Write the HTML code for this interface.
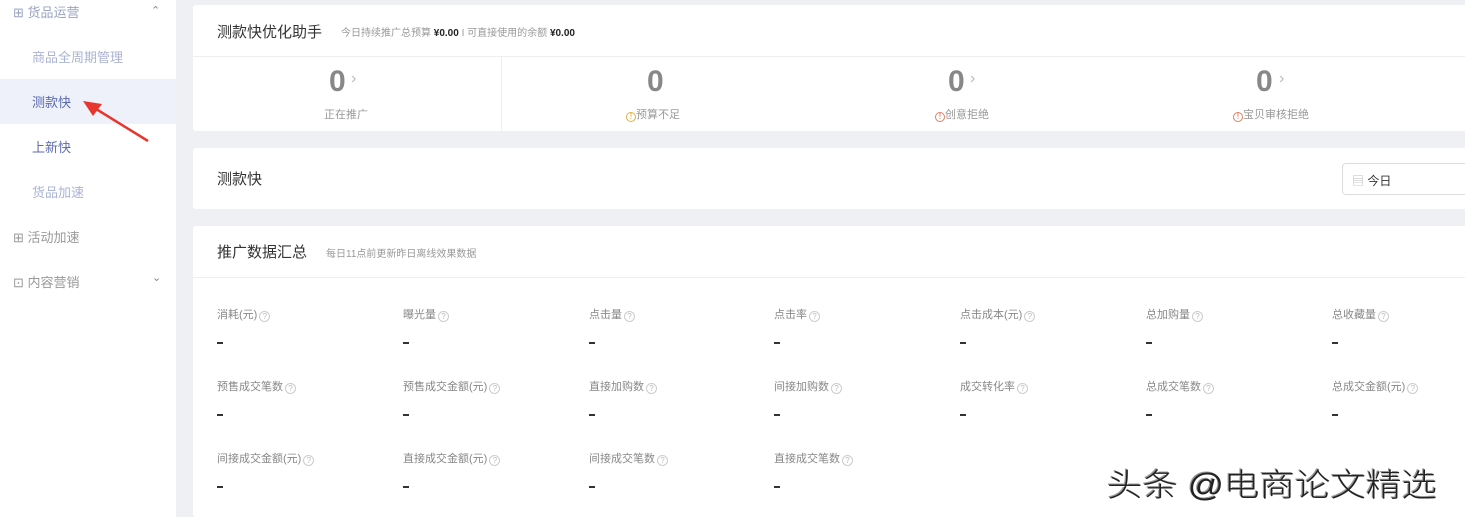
<!DOCTYPE html>
<html><head><meta charset="utf-8"><style>
*{margin:0;padding:0;box-sizing:border-box}
html,body{width:1465px;height:517px;overflow:hidden}
body{background:#eef0f4;font-family:"Liberation Sans","Noto Sans CJK SC",sans-serif;position:relative;color:#333}
.side{position:absolute;left:0;top:0;width:176px;height:517px;background:#fff}
.si{position:absolute;font-size:13px;color:#8a93b8}
.card{position:absolute;left:193px;width:1290px;background:#fff;border-radius:3px}
.abs{position:absolute}
.q{display:inline-block;width:11px;height:11px;border:1px solid #ccc;border-radius:50%;font-size:8px;line-height:9px;text-align:center;color:#bbb;vertical-align:-1px;margin-left:2px}
.lab{position:absolute;font-size:11px;color:#888}
.dash{position:absolute;width:6px;height:2px;background:#333}
.big{position:absolute;font-size:30px;font-weight:bold;color:#888;line-height:30px}
.arr{position:absolute;font-size:16px;color:#bbb}
.sl{position:absolute;font-size:11px;color:#999}
.w{display:inline-block;width:10px;height:10px;border:1px solid #e08060;border-radius:50%;font-size:8px;line-height:8px;text-align:center;color:#d06040;vertical-align:-1px}
</style></head><body>
<div class="side">
  <div class="si" style="left:13px;top:2px;color:#9aa3c3">⊞ 货品运营</div>
  <div class="si" style="left:151px;top:4px;color:#888;font-size:11px">⌃</div>
  <div class="si" style="left:32px;top:47px;color:#aab3d3">商品全周期管理</div>
  <div style="position:absolute;left:0;top:79px;width:176px;height:45px;background:#eef0fa"></div>
  <div class="si" style="left:32px;top:92px;color:#5c6bb0">测款快</div>
  <div class="si" style="left:32px;top:137px;color:#5c6bb0">上新快</div>
  <div class="si" style="left:32px;top:182px;color:#aab3d3">货品加速</div>
  <div class="si" style="left:13px;top:227px;color:#999">⊞ 活动加速</div>
  <div class="si" style="left:13px;top:272px;color:#999">⊡ 内容营销</div>
  <div class="si" style="left:152px;top:271px;color:#888;font-size:11px">⌄</div>
  <svg class="abs" style="left:80px;top:96px" width="72" height="48"><line x1="68" y1="45" x2="8" y2="8" stroke="#e8352e" stroke-width="2.5"/><polygon points="3,5 22,8 13,20" fill="#e8352e"/></svg>
</div>

<div class="card" style="top:5px;height:126px">
  <div class="abs" style="left:24px;top:16px;font-size:15px;color:#333">测款快优化助手</div>
  <div class="abs" style="left:148px;top:19px;font-size:10px;color:#999">今日持续推广总预算 <b style="color:#222">¥0.00</b> I 可直接使用的余额 <b style="color:#222">¥0.00</b></div>
  <div class="abs" style="left:0;top:51px;width:100%;height:1px;background:#eee"></div>
  <div class="abs" style="left:308px;top:52px;width:1px;height:74px;background:#eee"></div>
  <div class="big" style="left:136px;top:62px">0</div><div class="arr" style="left:158px;top:65px">›</div>
  <div class="sl" style="left:131px;top:101px">正在推广</div>
  <div class="big" style="left:454px;top:62px">0</div>
  <div class="sl" style="left:433px;top:101px"><span class="w" style="border-color:#e0b040;color:#d0a030">!</span>预算不足</div>
  <div class="big" style="left:755px;top:62px">0</div><div class="arr" style="left:777px;top:65px">›</div>
  <div class="sl" style="left:742px;top:101px"><span class="w">!</span>创意拒绝</div>
  <div class="big" style="left:1063px;top:62px">0</div><div class="arr" style="left:1086px;top:65px">›</div>
  <div class="sl" style="left:1040px;top:101px"><span class="w">!</span>宝贝审核拒绝</div>
</div>

<div class="card" style="top:148px;height:61px">
  <div class="abs" style="left:24px;top:20px;font-size:15px;color:#333">测款快</div>
  <div class="abs" style="left:1149px;top:15px;width:150px;height:32px;border:1px solid #ddd;border-radius:4px;font-size:12px;color:#333;padding:8px 0 0 9px"><span style="color:#bbb">▤</span> 今日</div>
</div>

<div class="card" style="top:226px;height:291px">
  <div class="abs" style="left:24px;top:15px;font-size:15px;color:#333">推广数据汇总</div>
  <div class="abs" style="left:133px;top:19px;font-size:10px;color:#999">每日11点前更新昨日离线效果数据</div>
  <div class="abs" style="left:0;top:51px;width:100%;height:1px;background:#eee"></div>
</div>

<div class="lab" style="left:217px;top:306px">消耗(元)<span class="q">?</span></div>
<div class="lab" style="left:403px;top:306px">曝光量<span class="q">?</span></div>
<div class="lab" style="left:589px;top:306px">点击量<span class="q">?</span></div>
<div class="lab" style="left:774px;top:306px">点击率<span class="q">?</span></div>
<div class="lab" style="left:960px;top:306px">点击成本(元)<span class="q">?</span></div>
<div class="lab" style="left:1146px;top:306px">总加购量<span class="q">?</span></div>
<div class="lab" style="left:1332px;top:306px">总收藏量<span class="q">?</span></div>
<div class="lab" style="left:217px;top:378px">预售成交笔数<span class="q">?</span></div>
<div class="lab" style="left:403px;top:378px">预售成交金额(元)<span class="q">?</span></div>
<div class="lab" style="left:589px;top:378px">直接加购数<span class="q">?</span></div>
<div class="lab" style="left:774px;top:378px">间接加购数<span class="q">?</span></div>
<div class="lab" style="left:960px;top:378px">成交转化率<span class="q">?</span></div>
<div class="lab" style="left:1146px;top:378px">总成交笔数<span class="q">?</span></div>
<div class="lab" style="left:1332px;top:378px">总成交金额(元)<span class="q">?</span></div>
<div class="lab" style="left:217px;top:450px">间接成交金额(元)<span class="q">?</span></div>
<div class="lab" style="left:403px;top:450px">直接成交金额(元)<span class="q">?</span></div>
<div class="lab" style="left:589px;top:450px">间接成交笔数<span class="q">?</span></div>
<div class="lab" style="left:774px;top:450px">直接成交笔数<span class="q">?</span></div>

<div class="dash" style="left:217px;top:342px"></div><div class="dash" style="left:403px;top:342px"></div><div class="dash" style="left:589px;top:342px"></div><div class="dash" style="left:774px;top:342px"></div><div class="dash" style="left:960px;top:342px"></div><div class="dash" style="left:1146px;top:342px"></div><div class="dash" style="left:1332px;top:342px"></div>
<div class="dash" style="left:217px;top:414px"></div><div class="dash" style="left:403px;top:414px"></div><div class="dash" style="left:589px;top:414px"></div><div class="dash" style="left:774px;top:414px"></div><div class="dash" style="left:960px;top:414px"></div><div class="dash" style="left:1146px;top:414px"></div><div class="dash" style="left:1332px;top:414px"></div>
<div class="dash" style="left:217px;top:486px"></div><div class="dash" style="left:403px;top:486px"></div><div class="dash" style="left:589px;top:486px"></div><div class="dash" style="left:774px;top:486px"></div>

<div class="abs" style="left:1107px;top:467px;font-size:32px;line-height:36px;font-weight:300;color:#222;letter-spacing:0;text-shadow:1px 1px 0 #fff,-1px -1px 0 #999;white-space:nowrap;transform:scaleX(1.11);transform-origin:left top">头条 @电商论文精选</div>
</body></html>
